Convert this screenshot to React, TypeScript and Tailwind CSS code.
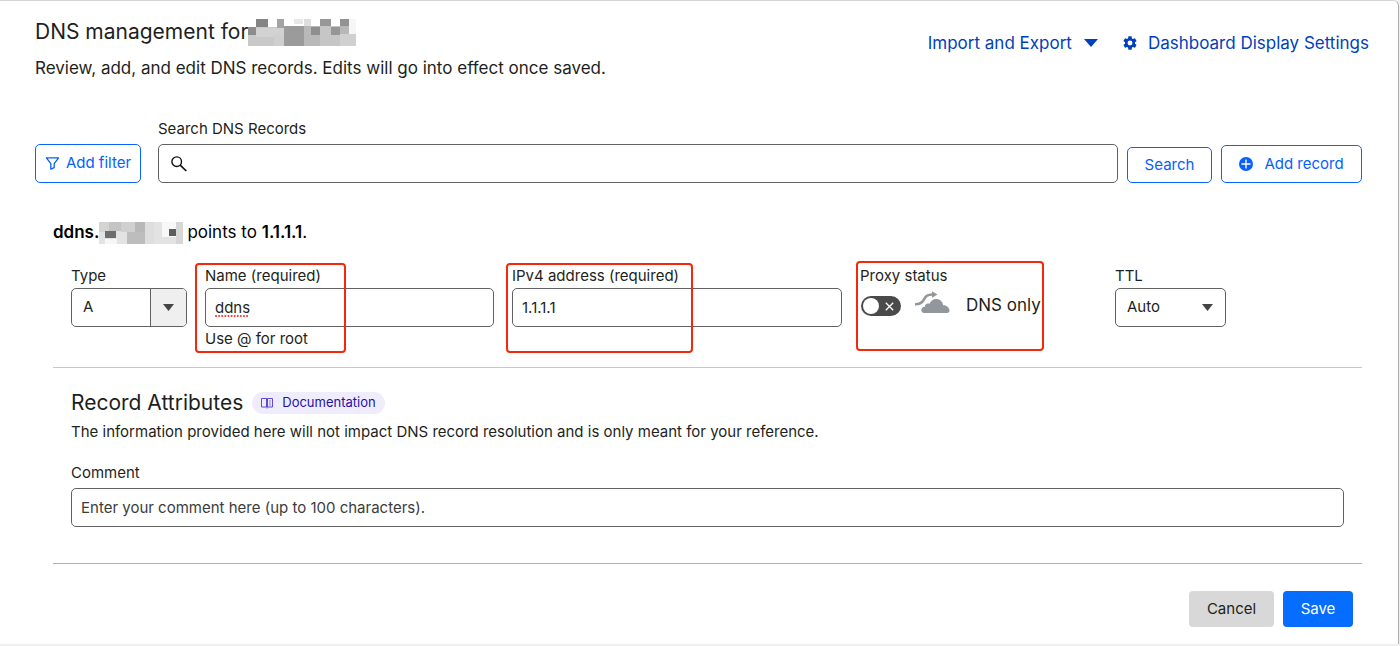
import React from "react";

const inputBox =
  "h-[39px] w-full rounded-[5px] border border-[#616161] bg-white px-[9px] text-[15px] text-[#1d1f20] outline-none";

type Cell = [number, number, number, number, string];

const titleCells: Cell[] = [
  [0, 8, 36, 19, "#c9c9c9"],
  [8, 0, 12, 8, "#848484"],
  [29, 0, 7, 9, "#a3a3a3"],
  [0, 8, 8, 8, "#8c8c8c"],
  [8, 9, 28, 9, "#d2d2d2"],
  [26, 16, 10, 11, "#cfcfcf"],
  [36, 7, 20, 20, "#9b9b9b"],
  [46, 0, 9, 5, "#e8e8e8"],
  [56, 0, 7, 7, "#dedede"],
  [56, 7, 16, 20, "#b9b9b9"],
  [63, 8, 9, 8, "#8f8f8f"],
  [72, 0, 11, 7, "#979797"],
  [72, 7, 20, 20, "#c6c6c6"],
  [83, 8, 9, 8, "#969696"],
  [92, 0, 9, 7, "#939393"],
  [92, 7, 9, 8, "#b8b8b8"],
  [92, 15, 16, 12, "#d0d0d0"],
  [101, 0, 7, 15, "#f6f6f6"],
];

const zoneCells: Cell[] = [
  [0, 0, 84, 22, "#e3e3e3"],
  [0, 0, 10, 10, "#d4d4d4"],
  [10, 0, 12, 9, "#c4c4c4"],
  [6, 17, 12, 5, "#f6f6f6"],
  [6, 9, 11, 7, "#6e6e6e"],
  [22, 0, 14, 10, "#d0d0d0"],
  [36, 0, 10, 10, "#b8b8b8"],
  [28, 10, 18, 12, "#bdbdbd"],
  [46, 0, 9, 22, "#dedede"],
  [63, 0, 14, 15, "#f8f8f8"],
  [70, 7, 7, 7, "#5c5c5c"],
  [77, 0, 7, 22, "#d6d6d6"],
];

function Redacted({ cells, className }: { cells: Cell[]; className: string }) {
  return (
    <svg className={className} shapeRendering="crispEdges" aria-hidden="true">
      {cells.map(([x, y, w, h, fill], i) => (
        <rect key={i} x={x} y={y} width={w} height={h} fill={fill} />
      ))}
    </svg>
  );
}

function Caret({ className }: { className: string }) {
  return (
    <svg className={className} viewBox="0 0 14 8" aria-hidden="true" preserveAspectRatio="none">
      <path d="M0 0h14L7 8z" fill="currentColor" />
    </svg>
  );
}

function Highlight({ className }: { className: string }) {
  return (
    <div
      className={`pointer-events-none absolute rounded-[4px] border-2 border-[#f5280a] ${className}`}
    />
  );
}

function GearIcon() {
  return (
    <svg className="size-4" viewBox="0 0 24 24" fill="currentColor" aria-hidden="true">
      <path
        fillRule="evenodd"
        d="M19.43 12.98c.04-.32.07-.64.07-.98s-.03-.66-.07-.98l2.11-1.65a.5.5 0 0 0 .12-.64l-2-3.46a.5.5 0 0 0-.61-.22l-2.49 1a7.3 7.3 0 0 0-1.69-.98l-.38-2.65A.49.49 0 0 0 14 2h-4a.49.49 0 0 0-.49.42l-.38 2.65c-.61.25-1.17.59-1.69.98l-2.49-1a.5.5 0 0 0-.61.22l-2 3.46a.5.5 0 0 0 .12.64l2.11 1.65a7.9 7.9 0 0 0 0 1.96l-2.11 1.65a.5.5 0 0 0-.12.64l2 3.46c.12.22.39.3.61.22l2.49-1c.52.4 1.08.73 1.69.98l.38 2.65c.03.24.24.42.49.42h4c.25 0 .46-.18.49-.42l.38-2.65a7.3 7.3 0 0 0 1.69-.98l2.49 1c.23.09.49 0 .61-.22l2-3.46a.5.5 0 0 0-.12-.64zM12 15.7a3.7 3.7 0 1 1 0-7.4 3.7 3.7 0 0 1 0 7.4z"
      />
    </svg>
  );
}

export default function App() {
  return (
    <div className="bg-[#f0f0f0] font-['Inter','Liberation_Sans',sans-serif] text-[#1d1f20]">
      <main className="mr-px rounded-tr-[6px] border-t border-r border-[#adadad] border-t-[#d5d5d5] bg-white pt-[17px] pr-9 pb-[17px] pl-[35px]">
        <header className="-mr-[7px] flex items-start justify-between">
          <div>
            <h1 className="flex items-center text-[21px] leading-[28px]">
              DNS management for
              <Redacted cells={titleCells} className="h-[27px] w-[108px]" />
            </h1>
            <p className="mt-[10px] text-[17px] leading-6">
              Review, add, and edit DNS records. Edits will go into effect once saved.
            </p>
          </div>
          <nav className="mt-[13px] flex items-center gap-6 text-[17px] leading-6 text-[#003fbd]">
            <button type="button" className="flex items-center gap-3">
              Import and Export
              <Caret className="h-2 w-[14px]" />
            </button>
            <a href="#settings" className="flex items-center gap-[10px]">
              <GearIcon />
              Dashboard Display Settings
            </a>
          </nav>
        </header>

        <form className="mt-[39px] flex items-end" role="search" onSubmit={(e) => e.preventDefault()}>
          <button
            type="button"
            className="flex h-[39px] w-[106px] items-center justify-center gap-1.5 rounded-[5px] border border-[#0a63ff] text-[15px] text-[#0560ff]"
          >
            <svg className="size-[15px]" viewBox="0 0 16 16" fill="none" stroke="currentColor" strokeWidth="1.4" strokeLinejoin="round" aria-hidden="true">
              <path d="M1.5 2h13L9.8 8.2v4.3L6.2 14V8.2z" />
            </svg>
            Add filter
          </button>
          <div className="ml-[17px] min-w-0 flex-1">
            <label htmlFor="search" className="block pb-[5px] text-[15px] leading-5">
              Search DNS Records
            </label>
            <div className="flex h-[39px] items-center rounded-[5px] border border-[#616161] px-3">
              <svg className="size-4" viewBox="0 0 16 16" fill="none" stroke="#111" strokeWidth="1.4" aria-hidden="true">
                <circle cx="5.7" cy="5.7" r="4.8" />
                <path d="M9.2 9.2 15.3 15" strokeWidth="1.7" />
              </svg>
              <input id="search" type="text" className="min-w-0 flex-1 px-2 outline-none" />
            </div>
          </div>
          <button type="submit" className="ml-[9px] h-9 w-[85px] rounded-[5px] border border-[#0a63ff] text-[15px] text-[#0560ff]">
            Search
          </button>
          <button
            type="button"
            className="ml-[9px] flex h-[38px] w-[141px] items-center justify-center gap-[11px] rounded-[5px] border border-[#0a63ff] text-[15px] text-[#0560ff]"
          >
            <svg className="size-[14px]" viewBox="0 0 14 14" aria-hidden="true">
              <circle cx="7" cy="7" r="7" fill="currentColor" />
              <path d="M7 2.5v9M2.5 7h9" stroke="#fff" strokeWidth="1.4" />
            </svg>
            Add record
          </button>
        </form>

        <section className="ml-[18px]">
          <p className="mt-[39px] flex h-[22px] items-center text-[17px] text-black">
            <b className="font-semibold">ddns.</b>
            <Redacted cells={zoneCells} className="mr-1 h-[22px] w-[84px]" />
            <span>
              points to <b className="font-semibold">1.1.1.1</b>.
            </span>
          </p>

          <div className="mt-[22px] flex items-start border-b border-[#c9c9c9] pb-4 pl-[18px]">
            <div className="w-[116px]">
              <label htmlFor="type" className="block pb-[2px] text-[15px] leading-5">Type</label>
              <div className="relative flex h-[39px] rounded-[5px] border border-[#616161]">
                <select id="type" className="w-full appearance-none rounded-[5px] pl-[11px] text-[15px] outline-none">
                  <option>A</option>
                </select>
                <span className="pointer-events-none absolute inset-y-0 right-0 flex w-9 items-center justify-center rounded-r-[4px] border-l border-[#616161] bg-[#efefef] text-[#444]">
                  <Caret className="h-[7px] w-[11px]" />
                </span>
              </div>
            </div>

            <div className="relative ml-[18px] w-[289px]">
              <label htmlFor="name" className="block pb-[2px] text-[15px] leading-5">Name (required)</label>
              <input id="name" defaultValue="ddns" className={inputBox} />
              <svg className="pointer-events-none absolute top-[49px] left-[10px] h-0.5 w-9" aria-hidden="true">
                <path d="M1 1h34" stroke="#f33" strokeWidth="2" strokeLinecap="round" strokeDasharray="0.1 3" />
              </svg>
              <p className="text-[15px] leading-6">Use @ for root</p>
              <Highlight className="-top-[3px] -left-[10px] h-[90px] w-[151px]" />
            </div>

            <div className="relative ml-[18px] w-[330px]">
              <label htmlFor="ip" className="block pb-[2px] text-[15px] leading-5">IPv4 address (required)</label>
              <input id="ip" defaultValue="1.1.1.1" className={inputBox} />
              <Highlight className="-top-[3px] -left-[6px] h-[90px] w-[187px]" />
            </div>

            <div className="relative ml-[18px] w-[255px]">
              <div id="proxy" className="text-[15px] leading-5">Proxy status</div>
              <div className="flex h-[40px] items-center pl-px">
                <button
                  type="button"
                  role="switch"
                  aria-checked="false"
                  aria-labelledby="proxy"
                  className="flex h-5 w-10 items-center justify-between rounded-full bg-[#4a4a4a] pr-[7px] pl-0.5"
                >
                  <span className="size-4 rounded-full bg-white" />
                  <svg className="size-[9px]" viewBox="0 0 9 9" stroke="#fff" strokeWidth="1.3" aria-hidden="true">
                    <path d="m.8.8 7.4 7.4M8.2.8.8 8.2" />
                  </svg>
                </button>
                <svg className="mb-2 ml-[14px] h-[23px] w-[35px]" viewBox="0 0 35 23" aria-hidden="true">
                  <path d="M0 13.2c4.500.2 6.500-.8 8.500-4C10.700 5.500 11.500 3.500 17.500 3.500" fill="none" stroke="#92979b" strokeWidth="2.600" />
                  <path d="M17 .3l5.500 3.200L17 6.700z" fill="#92979b" />
                  <path d="M9.500 22C7 22 5.800 20 6.500 18c.5-1.600 2-2.200 3.200-2 0-2.800 2.500-4.200 4.700-3.200C16 9.500 18 8 21 8c4 0 6.700 2.700 7.200 6.200 3.500-.2 6.300 2.600 6.300 5.300 0 1.600-.8 2.500-2.500 2.500z" fill="#92979b" />
                </svg>
                <span className="ml-4 text-[17px]">DNS only</span>
              </div>
              <Highlight className="-top-[5px] -left-[4px] h-[90px] w-[188px]" />
            </div>

            <div className="w-[111px]">
              <label htmlFor="ttl" className="block pb-[2px] text-[15px] leading-5">TTL</label>
              <div className="relative flex h-[39px] rounded-[5px] border border-[#616161]">
                <select id="ttl" className="w-full appearance-none rounded-[5px] pl-[11px] text-[15px] outline-none">
                  <option>Auto</option>
                </select>
                <Caret className="pointer-events-none absolute top-[15px] right-3 h-[7px] w-[11px] text-[#444]" />
              </div>
            </div>
          </div>

          <div className="border-b border-[#b0b0b0] px-[18px] pt-[21px] pb-9">
            <div className="flex items-center gap-[9px]">
              <h2 className="text-[21px] leading-[28px]">Record Attributes</h2>
              <a href="#docs" className="flex h-[22px] items-center gap-[9px] rounded-full bg-[#efedfc] px-[9px] text-[13px] text-[#2610a8]">
                <svg className="h-3 w-3" viewBox="0 0 12 12" fill="none" stroke="#5c4ad8" aria-hidden="true">
                  <path d="M.5 1.500h5v8.500h-5zM6.500 1.500h5v8.500h-5zM6 1v10.500" />
                  <path d="M8 4h2M8 6h2M8 8h2" strokeWidth=".7" />
                </svg>
                Documentation
              </a>
            </div>
            <p className="mt-[5px] text-[15px] leading-5">
              The information provided here will not impact DNS record resolution and is only meant for your reference.
            </p>
            <label htmlFor="comment" className="mt-[21px] block pb-[5px] text-[15px] leading-5">Comment</label>
            <input
              id="comment"
              placeholder="Enter your comment here (up to 100 characters)."
              className={`${inputBox} placeholder:text-[#3c3c3c]`}
            />
          </div>

          <div className="mt-[27px] flex justify-end gap-[9px] pr-[9px] text-[15px]">
            <button type="button" className="h-9 w-[85px] rounded-[4px] bg-[#d8d8d8]">Cancel</button>
            <button type="submit" className="h-9 w-[70px] rounded-[4px] bg-[#056dff] text-white">Save</button>
          </div>
        </section>
      </main>
      <div className="h-[3px]" />
    </div>
  );
}
